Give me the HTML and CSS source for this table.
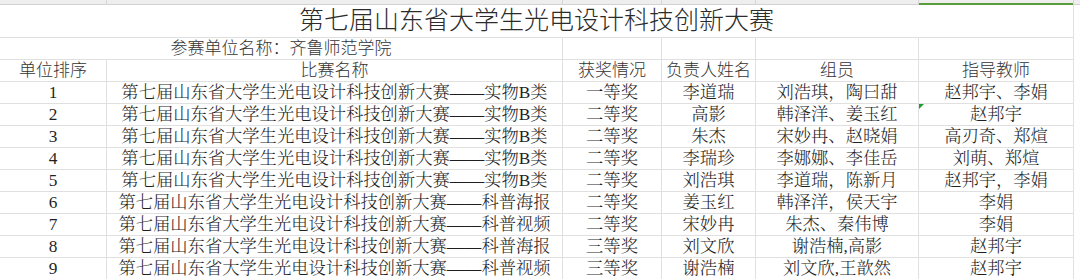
FILE: index.html
```html
<!DOCTYPE html>
<html lang="zh-CN">
<head>
<meta charset="utf-8">
<title>第七届山东省大学生光电设计科技创新大赛</title>
<link rel="stylesheet" href="styles.css">
</head>
<body>
<div class="sheet">
  <div class="strip"></div><div class="strip"></div><div class="strip"></div><div class="strip"></div><div class="strip"></div><div class="strip sel"></div><div class="strip end"></div>

  <div class="cell title span6">第七届山东省大学生光电设计科技创新大赛</div><div class="cell edge"></div>

  <div class="cell label span2">参赛单位名称：齐鲁师范学院</div><div class="cell"></div><div class="cell"></div><div class="cell"></div><div class="cell"></div><div class="cell edge"></div>

  <div class="cell head">单位排序</div><div class="cell head">比赛名称</div><div class="cell head">获奖情况</div><div class="cell head">负责人姓名</div><div class="cell head">组员</div><div class="cell head">指导教师</div><div class="cell edge"></div>

  <div class="cell data">1</div><div class="cell data">第七届山东省大学生光电设计科技创新大赛——实物B类</div><div class="cell data">一等奖</div><div class="cell data">李道瑞</div><div class="cell data">刘浩琪，陶曰甜</div><div class="cell data">赵邦宇、李娟</div><div class="cell edge"></div>

  <div class="cell data">2</div><div class="cell data">第七届山东省大学生光电设计科技创新大赛——实物B类</div><div class="cell data">二等奖</div><div class="cell data">高影</div><div class="cell data">韩泽洋、姜玉红</div><div class="cell data flag">赵邦宇</div><div class="cell edge"></div>

  <div class="cell data">3</div><div class="cell data">第七届山东省大学生光电设计科技创新大赛——实物B类</div><div class="cell data">二等奖</div><div class="cell data">朱杰</div><div class="cell data">宋妙冉、赵晓娟</div><div class="cell data">高刃奇、郑煊</div><div class="cell edge"></div>

  <div class="cell data">4</div><div class="cell data">第七届山东省大学生光电设计科技创新大赛——实物B类</div><div class="cell data">二等奖</div><div class="cell data">李瑞珍</div><div class="cell data">李娜娜、李佳岳</div><div class="cell data">刘萌、郑煊</div><div class="cell edge"></div>

  <div class="cell data">5</div><div class="cell data">第七届山东省大学生光电设计科技创新大赛——实物B类</div><div class="cell data">二等奖</div><div class="cell data">刘浩琪</div><div class="cell data">李道瑞，陈新月</div><div class="cell data">赵邦宇，李娟</div><div class="cell edge"></div>

  <div class="cell data">6</div><div class="cell data">第七届山东省大学生光电设计科技创新大赛——科普海报</div><div class="cell data">二等奖</div><div class="cell data">姜玉红</div><div class="cell data">韩泽洋，侯天宇</div><div class="cell data">李娟</div><div class="cell edge"></div>

  <div class="cell data">7</div><div class="cell data">第七届山东省大学生光电设计科技创新大赛——科普视频</div><div class="cell data">二等奖</div><div class="cell data">宋妙冉</div><div class="cell data">朱杰、秦伟博</div><div class="cell data">李娟</div><div class="cell edge"></div>

  <div class="cell data">8</div><div class="cell data">第七届山东省大学生光电设计科技创新大赛——科普海报</div><div class="cell data">三等奖</div><div class="cell data">刘文欣</div><div class="cell data">谢浩楠,高影</div><div class="cell data">赵邦宇</div><div class="cell edge"></div>

  <div class="cell data">9</div><div class="cell data">第七届山东省大学生光电设计科技创新大赛——科普视频</div><div class="cell data">三等奖</div><div class="cell data">谢浩楠</div><div class="cell data">刘文欣,王歆然</div><div class="cell data">赵邦宇</div><div class="cell edge"></div>
</div>
</body>
</html>
```

FILE: styles.css
```css
html, body {
  margin: 0;
  padding: 0;
  background: #ffffff;
  overflow: hidden;
}

.sheet {
  display: grid;
  grid-template-columns: 107px 456px 99px 94px 163px 155px 6px;
  grid-template-rows: 5px 33px 22px 22px repeat(9, 22px);
  width: 1080px;
  font-family: "Liberation Sans", "Noto Sans CJK SC", sans-serif;
  font-weight: 300;
  color: #262626;
}

.strip {
  box-sizing: border-box;
  background: #eeeeee;
  border-right: 1px solid #d6d6d6;
  border-bottom: 1px solid #d2d2d2;
  position: relative;
}

.strip.end {
  border-right: none;
}

.strip.sel::after {
  content: "";
  position: absolute;
  left: 0;
  right: 0;
  bottom: -1px;
  height: 2px;
  background: #5a9e3c;
}

.cell {
  box-sizing: border-box;
  border-right: 1px solid #e0e0e0;
  border-bottom: 1px solid #e0e0e0;
  display: flex;
  align-items: center;
  justify-content: center;
  white-space: nowrap;
  overflow: visible;
  font-size: 17px;
  line-height: 1;
  position: relative;
}

.cell.edge {
  border-right: none;
  border-bottom: none;
}

.span6 {
  grid-column: span 6;
}

.span2 {
  grid-column: span 2;
}

.title {
  font-size: 25px;
  color: #2b2b2b;
  padding-bottom: 1px;
}

.label {
  color: #333333;
}

.head {
  color: #333333;
}

.data {
  font-family: "Liberation Serif", "Noto Serif CJK SC", "AR PL UMing CN", "Noto Sans CJK SC", serif;
  font-size: 17.3px;
  font-weight: 300;
  color: #1f1f1f;
}

.flag::before {
  content: "";
  position: absolute;
  left: 0;
  top: 0;
  width: 0;
  height: 0;
  border-top: 5px solid #1e9e2e;
  border-right: 5px solid transparent;
}
```
